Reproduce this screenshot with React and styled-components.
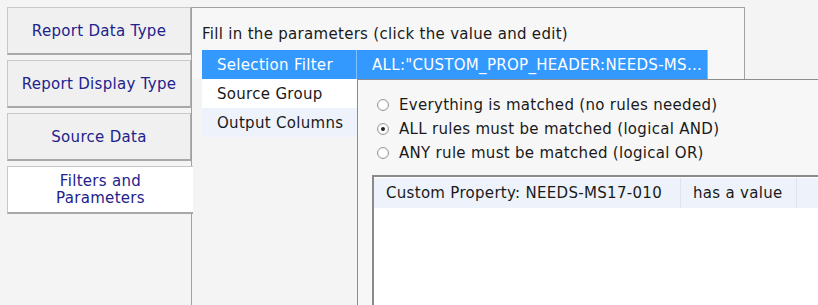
import styled, { createGlobalStyle } from "styled-components"

const Global = createGlobalStyle`
html, body {
  margin: 0;
  padding: 0;
  background: #f4f4f4;
  overflow: hidden;
}
body {
  font-family: "DejaVu Sans", Verdana, sans-serif;
  font-size: 15px;
  letter-spacing: 0.3px;
  color: #1a1a1a;
}
`

const Page = styled.div`
display: flex;
height: 305px;
padding: 7px 0 0 7px;
box-sizing: border-box;
`

const Sidebar = styled.div`
display: flex;
flex-direction: column;
gap: 5px;
width: 184px;
position: relative;
z-index: 2;
`

const Tab = styled.div`
height: 48px;
box-sizing: border-box;
display: flex;
align-items: center;
justify-content: center;
text-align: center;
line-height: 17px;
padding-top: 1px;
color: #22228c;
background: ${({active}) => (active ? "#ffffff" : "#f0f0f0")};
border: 1px solid #c8c8c8;
border-bottom: 2px solid #a8a8a8;
border-right: ${({active}) => (active ? "none" : "1px solid #b0b0b0")};
margin-right: ${({active}) => (active ? "-2px" : "0")};
`

const Panel = styled.div`
flex: 1;
position: relative;
height: 100%;
`

const Frame = styled.div`
width: 554px;
height: 72px;
box-sizing: border-box;
border: 1px solid #a0a0a0;
border-bottom: none;
background: #f7f7f7;
padding: 17px 0 0 10px;
`

const FrameSide = styled.div`
position: absolute;
left: 0;
top: 72px;
bottom: 0;
width: 0;
border-left: 1px solid #a0a0a0;
`

const Label = styled.div`
line-height: 19px;
margin-bottom: 6px;
white-space: nowrap;
`

const Grid = styled.div`
display: grid;
grid-template-columns: 155px 351px;
grid-auto-rows: 29px;
`

const Cell = styled.div`
display: flex;
align-items: center;
padding-left: 15px;
white-space: nowrap;
overflow: hidden;
background: ${({sel, alt}) => (sel ? "#3399ff" : alt ? "#eef3fb" : "#ffffff")};
color: ${({sel}) => (sel ? "#ffffff" : "#1a1a1a")};
border-right: ${({sel}) => (sel ? "1px solid #7fbfff" : "none")};
`

const Editor = styled.div`
position: absolute;
left: 166px;
top: 72px;
width: 480px;
bottom: 0;
background: #f7f7f7;
border-top: 1px solid #8c8c8c;
border-left: 1px solid #8c8c8c;
padding: 13px 0 0 19px;
box-sizing: border-box;
overflow: hidden;
`

const RadioRow = styled.label`
display: flex;
align-items: center;
gap: 10px;
height: 24px;
white-space: nowrap;
`

const Radio = styled.span`
width: 12px;
height: 12px;
flex: none;
border-radius: 50%;
box-sizing: border-box;
border: 1px solid #9a9a9a;
background: radial-gradient(circle, #ffffff 40%, #e4e4e4 100%);
display: flex;
align-items: center;
justify-content: center;
&::after {
  content: "";
  width: 4px;
  height: 4px;
  border-radius: 50%;
  background: ${({checked}) => (checked ? "#222" : "transparent")};
}
`

const List = styled.div`
margin: 10px 0 0 -5px;
height: 200px;
background: #ffffff;
border-top: 2px solid #8a8a8a;
border-left: 2px solid #8a8a8a;
padding-top: 1px;
`

const ListRow = styled.div`
display: flex;
height: 30px;
background: #eef3fb;
`

const ListCell = styled.div`
display: flex;
align-items: center;
padding: 0 12px;
width: ${({w}) => w}px;
flex: none;
box-sizing: border-box;
border-right: 1px solid #dde4ef;
white-space: nowrap;
`

const App = () => {
    return (
        <Page>
            <Global />
            <Sidebar>
                <Tab>Report Data Type</Tab>
                <Tab>Report Display Type</Tab>
                <Tab>Source Data</Tab>
                <Tab active>Filters and<br />Parameters</Tab>
            </Sidebar>
            <Panel>
                <Frame>
                    <Label>Fill in the parameters (click the value and edit)</Label>
                    <Grid>
                        <Cell sel>Selection Filter</Cell>
                        <Cell sel>ALL:"CUSTOM_PROP_HEADER:NEEDS-MS...</Cell>
                        <Cell>Source Group</Cell>
                        <Cell></Cell>
                        <Cell alt>Output Columns</Cell>
                        <Cell alt></Cell>
                    </Grid>
                </Frame>
                <FrameSide />
                <Editor>
                    <RadioRow><Radio />Everything is matched (no rules needed)</RadioRow>
                    <RadioRow><Radio checked />ALL rules must be matched (logical AND)</RadioRow>
                    <RadioRow><Radio />ANY rule must be matched (logical OR)</RadioRow>
                    <List>
                        <ListRow>
                            <ListCell w={307}>Custom Property: NEEDS-MS17-010</ListCell>
                            <ListCell w={116}>has a value</ListCell>
                        </ListRow>
                    </List>
                </Editor>
            </Panel>
        </Page>
    )
}

export default App
